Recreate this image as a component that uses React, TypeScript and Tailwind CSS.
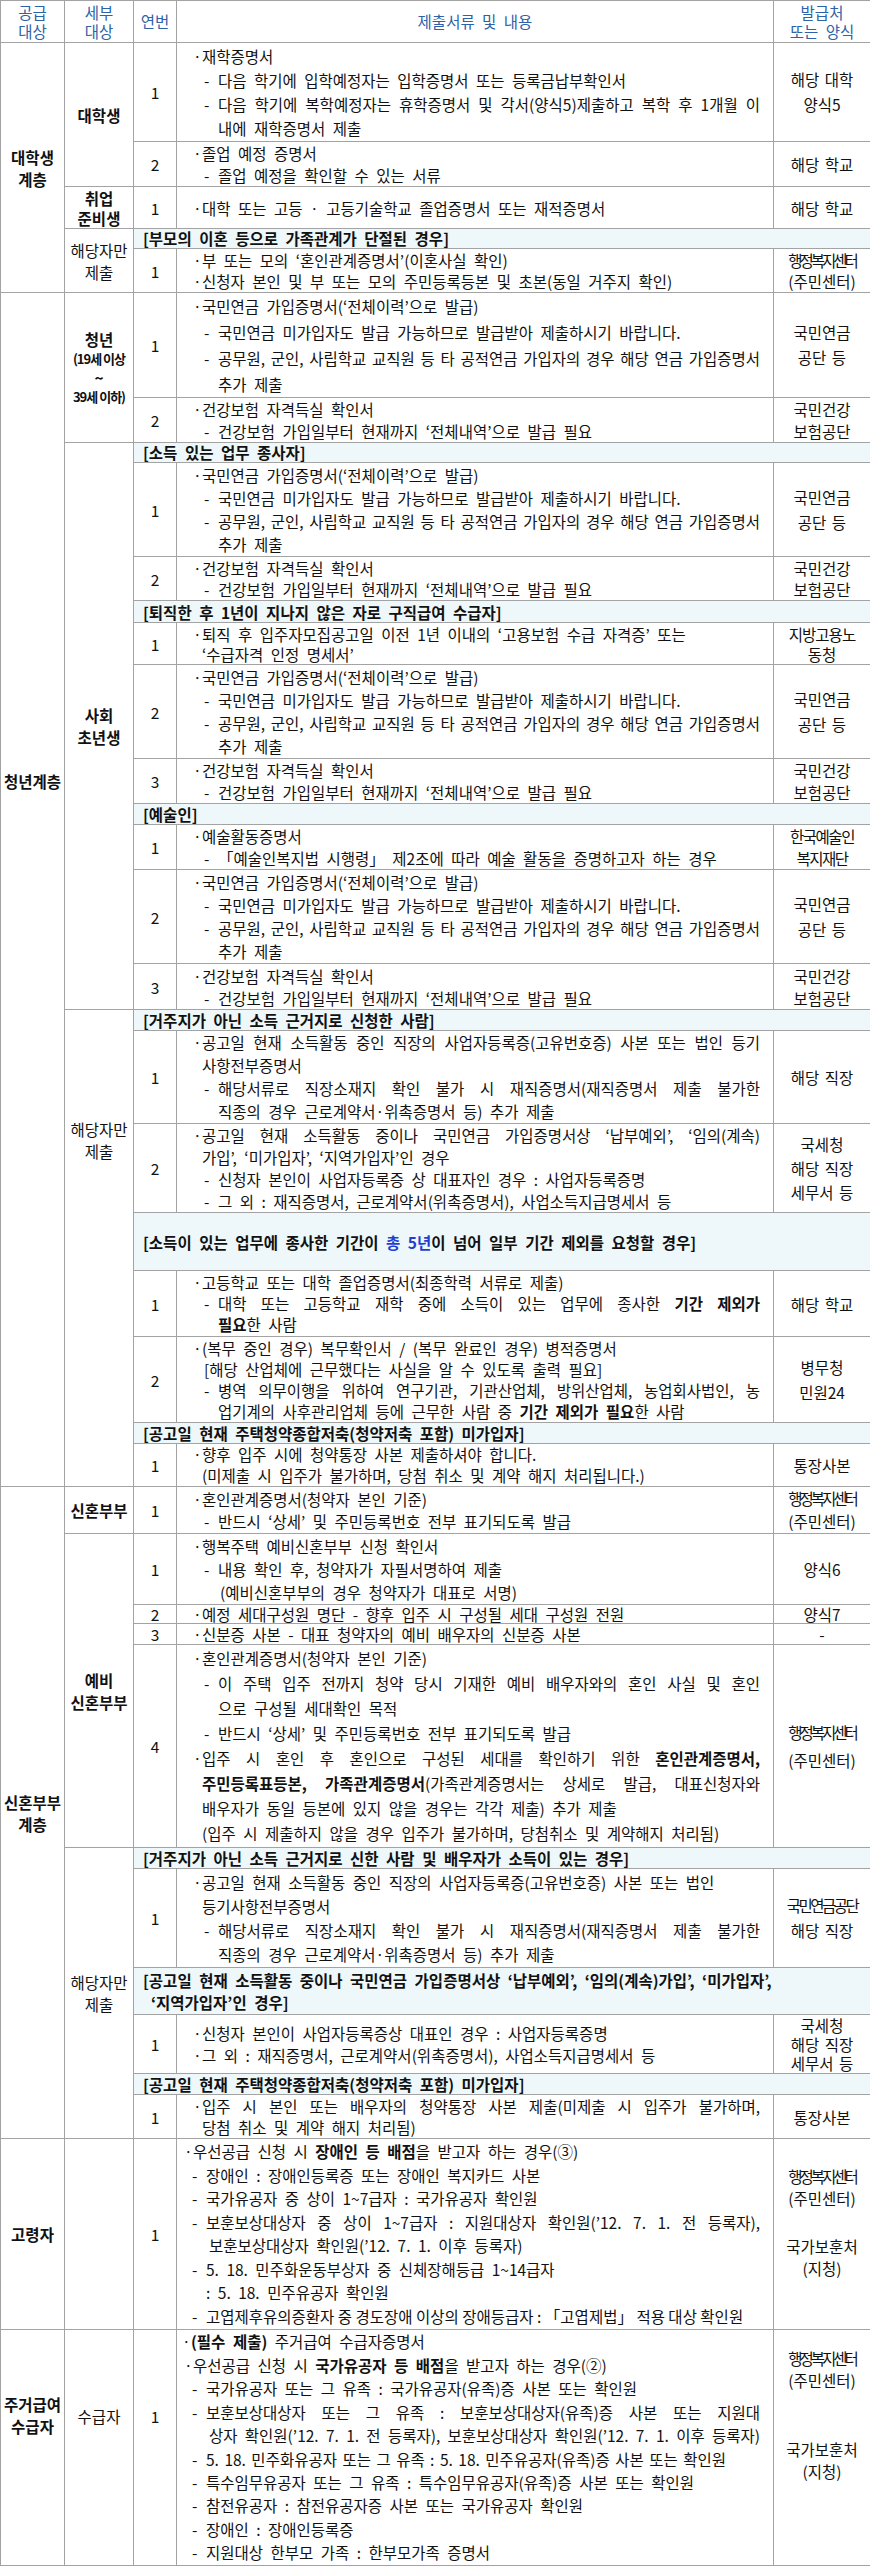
import React from 'react';

// 제출서류 안내 표 (공급대상별)

type Kids = { children?: React.ReactNode; j?: boolean; p?: string };

const bd = 'border border-[#a3a3a3] p-0';
const jus = 'flex-1 text-justify [text-align-last:justify] [word-spacing:2px]';
const c1 = `${bd} text-center align-middle font-bold leading-[22px]`;
const c2n = `${bd} text-center align-middle leading-[22px]`;
const hd = `${bd} text-center align-middle font-normal leading-[19px] text-[#2d62a8]`;

const squeeze: Record<string, string> = {
  '행정복지센터': 'tracking-[-3px]',
  '국민연금공단': 'tracking-[-2.5px]',
  '한국예술인': 'tracking-[-1.5px]',
  '복지재단': 'tracking-[-1.5px]',
  '지방고용노': 'tracking-[-1px]',
};

function B({ children, j, p = 'pl-[16px]' }: Kids) {
  return (
    <div className={`flex ${p}`}>
      <span className="w-[9px] shrink-0">·</span>
      <span className={j ? jus : 'whitespace-nowrap'}>{children}</span>
    </div>
  );
}

function D({ children, j, p = 'pl-[27px]' }: Kids) {
  return (
    <div className={`flex ${p}`}>
      <span className="w-[14px] shrink-0">-</span>
      <span className={j ? jus : 'whitespace-nowrap'}>{children}</span>
    </div>
  );
}

function C({ children, j, p = 'pl-[25px]' }: Kids) {
  return (
    <div
      className={`${p} ${j ? 'text-justify [text-align-last:justify] [word-spacing:2px]' : 'whitespace-nowrap'}`}
    >
      {children}
    </div>
  );
}

function Num({ n }: { n: string }) {
  return <td className={`${bd} text-center align-middle leading-[18px]`}>{n}</td>;
}

function Doc({ lh, children }: { lh: string; children: React.ReactNode }) {
  return <td className={`${bd} pr-[13px] align-middle ${lh}`}>{children}</td>;
}

function Src({ t, lh = 'leading-[22px]' }: { t: string[]; lh?: string }) {
  return (
    <td className={`${bd} text-center align-middle ${lh}`}>
      {t.map((s, i) => (
        <div key={i} className={`whitespace-nowrap [word-spacing:2px] ${squeeze[s] ?? ''}`}>
          {s}
        </div>
      ))}
    </td>
  );
}

function Sub({
  h,
  lead,
  lh = 'leading-[19px]',
  children,
}: {
  h: string;
  lead?: React.ReactNode;
  lh?: string;
  children: React.ReactNode;
}) {
  return (
    <tr className={h}>
      {lead}
      <td colSpan={3} className={`${bd} bg-[#eef7f9] pl-[9px] font-bold align-middle whitespace-nowrap ${lh}`}>
        {children}
      </td>
    </tr>
  );
}

export default function App() {
  const pension = (
    <>
      <B>국민연금 가입증명서(‘전체이력’으로 발급)</B>
      <D>국민연금 미가입자도 발급 가능하므로 발급받아 제출하시기 바랍니다.</D>
      <D j>공무원, 군인, 사립학교 교직원 등 타 공적연금 가입자의 경우 해당 연금 가입증명서</D>
      <C p="pl-[41px]">추가 제출</C>
    </>
  );
  const health = (
    <>
      <B>건강보험 자격득실 확인서</B>
      <D>건강보험 가입일부터 현재까지 ‘전체내역’으로 발급 필요</D>
    </>
  );
  const pensionSrc = ['국민연금', '공단 등'];
  const healthSrc = ['국민건강', '보험공단'];
  const center = ['행정복지센터', '(주민센터)'];

  return (
    <div className="w-[870px] bg-white text-[#111] font-['Noto_Sans_CJK_KR','Noto_Sans',sans-serif] text-[15.5px] [word-spacing:4px]">
      <table className="w-[870px] table-fixed border-collapse">
        <colgroup>
          <col className="w-[64px]" />
          <col className="w-[69px]" />
          <col className="w-[43px]" />
          <col className="w-[597px]" />
          <col className="w-[97px]" />
        </colgroup>
        <tbody>
          <tr className="h-[42px]">
            <th className={hd}>공급<br />대상</th>
            <th className={hd}>세부<br />대상</th>
            <th className={hd}>연번</th>
            <th className={hd}>제출서류 및 내용</th>
            <th className={hd}>발급처<br />또는 양식</th>
          </tr>

          {/* 대학생 계층 */}
          <tr className="h-[99px]">
            <td rowSpan={5} className={c1}>대학생<br />계층</td>
            <td rowSpan={2} className={c1}>대학생</td>
            <Num n="1" />
            <Doc lh="leading-[24px]">
              <B>재학증명서</B>
              <D>다음 학기에 입학예정자는 입학증명서 또는 등록금납부확인서</D>
              <D j>다음 학기에 복학예정자는 휴학증명서 및 각서(양식5)제출하고 복학 후 1개월 이</D>
              <C p="pl-[41px]">내에 재학증명서 제출</C>
            </Doc>
            <Src t={['해당 대학', '양식5']} lh="leading-[25px]" />
          </tr>
          <tr className="h-[45px]">
            <Num n="2" />
            <Doc lh="leading-[22px]">
              <B>졸업 예정 증명서</B>
              <D>졸업 예정을 확인할 수 있는 서류</D>
            </Doc>
            <Src t={['해당 학교']} />
          </tr>
          <tr className="h-[42px]">
            <td className={`${bd} text-center align-middle font-bold leading-[20px]`}>취업<br />준비생</td>
            <Num n="1" />
            <Doc lh="leading-[22px]">
              <B>대학 또는 고등 · 고등기술학교 졸업증명서 또는 재적증명서</B>
            </Doc>
            <Src t={['해당 학교']} />
          </tr>
          <Sub h="h-[20px]" lead={<td rowSpan={2} className={c2n}>해당자만<br />제출</td>}>
            [부모의 이혼 등으로 가족관계가 단절된 경우]
          </Sub>
          <tr className="h-[44px]">
            <Num n="1" />
            <Doc lh="leading-[21px]">
              <B>부 또는 모의 ‘혼인관계증명서’(이혼사실 확인)</B>
              <B>신청자 본인 및 부 또는 모의 주민등록등본 및 초본(동일 거주지 확인)</B>
            </Doc>
            <Src t={center} lh="leading-[21px]" />
          </tr>

          {/* 청년계층 */}
          <tr className="h-[105px]">
            <td rowSpan={21} className={`${bd} text-center align-top pt-[477px] font-bold leading-[22px]`}>
              청년계층
            </td>
            <td rowSpan={2} className={`${bd} text-center align-middle font-bold leading-[19px]`}>
              <div>청년</div>
              <div className="text-[13px] tracking-[-1px] whitespace-nowrap [word-spacing:0px]">(19세 이상</div>
              <div>~</div>
              <div className="text-[13px] tracking-[-1px] whitespace-nowrap [word-spacing:0px]">39세 이하)</div>
            </td>
            <Num n="1" />
            <Doc lh="leading-[26px]">{pension}</Doc>
            <Src t={pensionSrc} lh="leading-[25px]" />
          </tr>
          <tr className="h-[45px]">
            <Num n="2" />
            <Doc lh="leading-[22px]">{health}</Doc>
            <Src t={healthSrc} />
          </tr>
          <Sub h="h-[20px]" lead={<td rowSpan={11} className={c1}>사회<br />초년생</td>}>
            [소득 있는 업무 종사자]
          </Sub>
          <tr className="h-[94px]">
            <Num n="1" />
            <Doc lh="leading-[23px]">{pension}</Doc>
            <Src t={pensionSrc} lh="leading-[25px]" />
          </tr>
          <tr className="h-[44px]">
            <Num n="2" />
            <Doc lh="leading-[21px]">{health}</Doc>
            <Src t={healthSrc} lh="leading-[21px]" />
          </tr>
          <Sub h="h-[22px]" lh="leading-[20px]">[퇴직한 후 1년이 지나지 않은 자로 구직급여 수급자]</Sub>
          <tr className="h-[42px]">
            <Num n="1" />
            <Doc lh="leading-[20px]">
              <B>퇴직 후 입주자모집공고일 이전 1년 이내의 ‘고용보험 수급 자격증’ 또는</B>
              <C>‘수급자격 인정 명세서’</C>
            </Doc>
            <Src t={['지방고용노', '동청']} lh="leading-[20px]" />
          </tr>
          <tr className="h-[94px]">
            <Num n="2" />
            <Doc lh="leading-[23px]">{pension}</Doc>
            <Src t={pensionSrc} lh="leading-[25px]" />
          </tr>
          <tr className="h-[45px]">
            <Num n="3" />
            <Doc lh="leading-[22px]">{health}</Doc>
            <Src t={healthSrc} />
          </tr>
          <Sub h="h-[21px]">[예술인]</Sub>
          <tr className="h-[45px]">
            <Num n="1" />
            <Doc lh="leading-[22px]">
              <B>예술활동증명서</B>
              <D>「예술인복지법 시행령」 제2조에 따라 예술 활동을 증명하고자 하는 경우</D>
            </Doc>
            <Src t={['한국예술인', '복지재단']} />
          </tr>
          <tr className="h-[94px]">
            <Num n="2" />
            <Doc lh="leading-[23px]">{pension}</Doc>
            <Src t={pensionSrc} lh="leading-[25px]" />
          </tr>
          <tr className="h-[46px]">
            <Num n="3" />
            <Doc lh="leading-[22px]">{health}</Doc>
            <Src t={healthSrc} />
          </tr>
          <Sub
            h="h-[21px]"
            lead={
              <td rowSpan={8} className={`${bd} text-center align-top pt-[108px] leading-[22px]`}>
                해당자만<br />제출
              </td>
            }
          >
            [거주지가 아닌 소득 근거지로 신청한 사람]
          </Sub>
          <tr className="h-[93px]">
            <Num n="1" />
            <Doc lh="leading-[23px]">
              <B j>공고일 현재 소득활동 중인 직장의 사업자등록증(고유번호증) 사본 또는 법인 등기</B>
              <C>사항전부증명서</C>
              <D j>해당서류로 직장소재지 확인 불가 시 재직증명서(재직증명서 제출 불가한</D>
              <C p="pl-[41px]">직종의 경우 근로계약서·위촉증명서 등) 추가 제출</C>
            </Doc>
            <Src t={['해당 직장']} />
          </tr>
          <tr className="h-[89px]">
            <Num n="2" />
            <Doc lh="leading-[22px]">
              <B j>공고일 현재 소득활동 중이나 국민연금 가입증명서상 ‘납부예외’, ‘임의(계속)</B>
              <C>가입’, ‘미가입자’, ‘지역가입자’인 경우</C>
              <D>신청자 본인이 사업자등록증 상 대표자인 경우 : 사업자등록증명</D>
              <D>그 외 : 재직증명서, 근로계약서(위촉증명서), 사업소득지급명세서 등</D>
            </Doc>
            <Src t={['국세청', '해당 직장', '세무서 등']} lh="leading-[24px]" />
          </tr>
          <Sub h="h-[58px]" lh="leading-[20px]">
            [소득이 있는 업무에 종사한 기간이 <span className="text-[#1f3fd0]">총 5년</span>이 넘어 일부 기간
            제외를 요청할 경우]
          </Sub>
          <tr className="h-[66px]">
            <Num n="1" />
            <Doc lh="leading-[21px]">
              <B>고등학교 또는 대학 졸업증명서(최종학력 서류로 제출)</B>
              <D j>
                대학 또는 고등학교 재학 중에 소득이 있는 업무에 종사한 <b>기간 제외가</b>
              </D>
              <C p="pl-[41px]">
                <b>필요</b>한 사람
              </C>
            </Doc>
            <Src t={['해당 학교']} />
          </tr>
          <tr className="h-[86px]">
            <Num n="2" />
            <Doc lh="leading-[21px]">
              <B>(복무 중인 경우) 복무확인서 / (복무 완료인 경우) 병적증명서</B>
              <C p="pl-[27px]">[해당 산업체에 근무했다는 사실을 알 수 있도록 출력 필요]</C>
              <D j>병역 의무이행을 위하여 연구기관, 기관산업체, 방위산업체, 농업회사법인, 농</D>
              <C p="pl-[41px]">
                업기계의 사후관리업체 등에 근무한 사람 중 <b>기간 제외가 필요</b>한 사람
              </C>
            </Doc>
            <Src t={['병무청', '민원24']} lh="leading-[25px]" />
          </tr>
          <Sub h="h-[21px]">[공고일 현재 주택청약종합저축(청약저축 포함) 미가입자]</Sub>
          <tr className="h-[43px]">
            <Num n="1" />
            <Doc lh="leading-[21px]">
              <B>향후 입주 시에 청약통장 사본 제출하셔야 합니다.</B>
              <C>(미제출 시 입주가 불가하며, 당첨 취소 및 계약 해지 처리됩니다.)</C>
            </Doc>
            <Src t={['통장사본']} />
          </tr>

          {/* 신혼부부 계층 */}
          <tr className="h-[47px]">
            <td rowSpan={11} className={c1}>신혼부부<br />계층</td>
            <td className={c1}>신혼부부</td>
            <Num n="1" />
            <Doc lh="leading-[22px]">
              <B>혼인관계증명서(청약자 본인 기준)</B>
              <D>반드시 ‘상세’ 및 주민등록번호 전부 표기되도록 발급</D>
            </Doc>
            <Src t={center} lh="leading-[23px]" />
          </tr>
          <tr className="h-[71px]">
            <td rowSpan={4} className={c1}>예비<br />신혼부부</td>
            <Num n="1" />
            <Doc lh="leading-[23px]">
              <B>행복주택 예비신혼부부 신청 확인서</B>
              <D>내용 확인 후, 청약자가 자필서명하여 제출</D>
              <C p="pl-[43px]">(예비신혼부부의 경우 청약자가 대표로 서명)</C>
            </Doc>
            <Src t={['양식6']} />
          </tr>
          <tr className="h-[19px]">
            <Num n="2" />
            <Doc lh="leading-[18px]">
              <B>예정 세대구성원 명단 - 향후 입주 시 구성될 세대 구성원 전원</B>
            </Doc>
            <Src t={['양식7']} lh="leading-[18px]" />
          </tr>
          <tr className="h-[21px]">
            <Num n="3" />
            <Doc lh="leading-[20px]">
              <B>신분증 사본 - 대표 청약자의 예비 배우자의 신분증 사본</B>
            </Doc>
            <Src t={['-']} lh="leading-[20px]" />
          </tr>
          <tr className="h-[203px]">
            <Num n="4" />
            <Doc lh="leading-[25px]">
              <B>혼인관계증명서(청약자 본인 기준)</B>
              <D j>이 주택 입주 전까지 청약 당시 기재한 예비 배우자와의 혼인 사실 및 혼인</D>
              <C p="pl-[41px]">으로 구성될 세대확인 목적</C>
              <D>반드시 ‘상세’ 및 주민등록번호 전부 표기되도록 발급</D>
              <B j>
                입주 시 혼인 후 혼인으로 구성된 세대를 확인하기 위한 <b>혼인관계증명서,</b>
              </B>
              <C j>
                <b>주민등록표등본, 가족관계증명서</b>(가족관계증명서는 상세로 발급, 대표신청자와
              </C>
              <C>배우자가 동일 등본에 있지 않을 경우는 각각 제출) 추가 제출</C>
              <C>(입주 시 제출하지 않을 경우 입주가 불가하며, 당첨취소 및 계약해지 처리됨)</C>
            </Doc>
            <Src t={center} lh="leading-[28px]" />
          </tr>
          <Sub h="h-[21px]" lead={<td rowSpan={6} className={c2n}>해당자만<br />제출</td>}>
            [거주지가 아닌 소득 근거지로 신한 사람 및 배우자가 소득이 있는 경우]
          </Sub>
          <tr className="h-[99px]">
            <Num n="1" />
            <Doc lh="leading-[24px]">
              <B>공고일 현재 소득활동 중인 직장의 사업자등록증(고유번호증) 사본 또는 법인</B>
              <C>등기사항전부증명서</C>
              <D j>해당서류로 직장소재지 확인 불가 시 재직증명서(재직증명서 제출 불가한</D>
              <C p="pl-[41px]">직종의 경우 근로계약서·위촉증명서 등) 추가 제출</C>
            </Doc>
            <Src t={['국민연금공단', '해당 직장']} lh="leading-[25px]" />
          </tr>
          <Sub h="h-[47px]" lh="leading-[22px]">
            <div>[공고일 현재 소득활동 중이나 국민연금 가입증명서상 ‘납부예외’, ‘임의(계속)가입’, ‘미가입자’,</div>
            <div className="pl-[8px]">‘지역가입자’인 경우]</div>
          </Sub>
          <tr className="h-[59px]">
            <Num n="1" />
            <Doc lh="leading-[22px]">
              <B>신청자 본인이 사업자등록증상 대표인 경우 : 사업자등록증명</B>
              <B>그 외 : 재직증명서, 근로계약서(위촉증명서), 사업소득지급명세서 등</B>
            </Doc>
            <Src t={['국세청', '해당 직장', '세무서 등']} lh="leading-[19px]" />
          </tr>
          <Sub h="h-[21px]">[공고일 현재 주택청약종합저축(청약저축 포함) 미가입자]</Sub>
          <tr className="h-[44px]">
            <Num n="1" />
            <Doc lh="leading-[21px]">
              <B j>입주 시 본인 또는 배우자의 청약통장 사본 제출(미제출 시 입주가 불가하며,</B>
              <C>당첨 취소 및 계약 해지 처리됨)</C>
            </Doc>
            <Src t={['통장사본']} />
          </tr>

          {/* 고령자 */}
          <tr className="h-[191px]">
            <td className={c1}>고령자</td>
            <td className={bd}></td>
            <Num n="1" />
            <Doc lh="leading-[23.5px]">
              <B p="pl-[7px]">
                우선공급 신청 시 <b>장애인 등 배점</b>을 받고자 하는 경우(③)
              </B>
              <D p="pl-[15px]">장애인 : 장애인등록증 또는 장애인 복지카드 사본</D>
              <D p="pl-[15px]">국가유공자 중 상이 1~7급자 : 국가유공자 확인원</D>
              <D p="pl-[15px]" j>
                보훈보상대상자 중 상이 1~7급자 : 지원대상자 확인원(’12. 7. 1. 전 등록자),
              </D>
              <C p="pl-[32px]">보훈보상대상자 확인원(’12. 7. 1. 이후 등록자)</C>
              <D p="pl-[15px]">5. 18. 민주화운동부상자 중 신체장해등급 1~14급자</D>
              <C p="pl-[29px]">: 5. 18. 민주유공자 확인원</C>
              <D p="pl-[15px] [word-spacing:0px]">
                고엽제후유의증환자 중 경도장애 이상의 장애등급자 : 「고엽제법」 적용 대상 확인원
              </D>
            </Doc>
            <td className={`${bd} text-center align-top pt-[26px] leading-[22px]`}>
              <div className="whitespace-nowrap tracking-[-3px]">행정복지센터</div>
              <div>(주민센터)</div>
              <div className="mt-[26px]">국가보훈처</div>
              <div>(지청)</div>
            </td>
          </tr>

          {/* 주거급여 수급자 */}
          <tr className="h-[236px]">
            <td className={`${bd} text-center align-top pt-[63px] font-bold leading-[22px]`}>
              주거급여<br />수급자
            </td>
            <td className={`${bd} text-center align-top pt-[75px] leading-[22px]`}>수급자</td>
            <td className={`${bd} text-center align-top pt-[75px] leading-[22px]`}>1</td>
            <Doc lh="leading-[23.4px]">
              <B p="pl-[5px]">
                <b>(필수 제출)</b> 주거급여 수급자증명서
              </B>
              <B p="pl-[7px]">
                우선공급 신청 시 <b>국가유공자 등 배점</b>을 받고자 하는 경우(②)
              </B>
              <D p="pl-[15px]">국가유공자 또는 그 유족 : 국가유공자(유족)증 사본 또는 확인원</D>
              <D p="pl-[15px]" j>
                보훈보상대상자 또는 그 유족 : 보훈보상대상자(유족)증 사본 또는 지원대
              </D>
              <C p="pl-[32px]" j>
                상자 확인원(’12. 7. 1. 전 등록자), 보훈보상대상자 확인원(’12. 7. 1. 이후 등록자)
              </C>
              <D p="pl-[15px] [word-spacing:2px]">
                5. 18. 민주화유공자 또는 그 유족 : 5. 18. 민주유공자(유족)증 사본 또는 확인원
              </D>
              <D p="pl-[15px]">특수임무유공자 또는 그 유족 : 특수임무유공자(유족)증 사본 또는 확인원</D>
              <D p="pl-[15px]">참전유공자 : 참전유공자증 사본 또는 국가유공자 확인원</D>
              <D p="pl-[15px]">장애인 : 장애인등록증</D>
              <D p="pl-[15px]">지원대상 한부모 가족 : 한부모가족 증명서</D>
            </Doc>
            <td className={`${bd} text-center align-top pt-[17px] leading-[22px]`}>
              <div className="whitespace-nowrap tracking-[-3px]">행정복지센터</div>
              <div>(주민센터)</div>
              <div className="mt-[47px]">국가보훈처</div>
              <div>(지청)</div>
            </td>
          </tr>
        </tbody>
      </table>
    </div>
  );
}
